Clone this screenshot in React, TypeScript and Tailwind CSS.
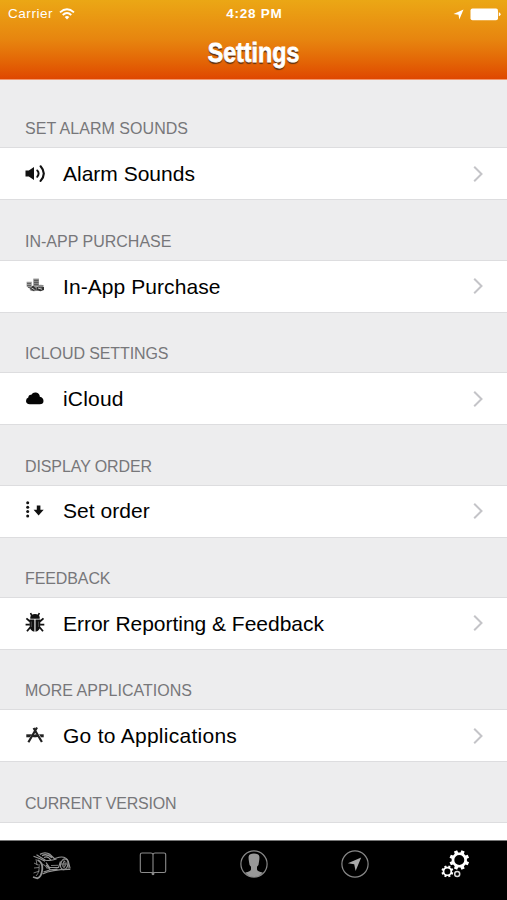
import type { ReactNode } from "react";

function gearPath(cx: number, cy: number, outer: number, root: number, hole: number, teeth: number): string {
  const step = (Math.PI * 2) / teeth;
  const at = (r: number, a: number) => `${(cx + r * Math.cos(a)).toFixed(2)} ${(cy + r * Math.sin(a)).toFixed(2)}`;
  const points: string[] = [];
  for (let i = 0; i < teeth; i++) {
    const a = i * step + step / 2;
    points.push(at(root, a - step * 0.31), at(outer, a - step * 0.22), at(outer, a + step * 0.22), at(root, a + step * 0.31));
  }
  return `M${points.join("L")}ZM${cx - hole} ${cy}a${hole} ${hole} 0 1 0 ${hole * 2} 0a${hole} ${hole} 0 1 0 ${-hole * 2} 0Z`;
}

function SpeakerIcon() {
  return (
    <svg width="22" height="22" viewBox="0 0 22 22" fill="none" stroke="#111" strokeLinecap="round">
      <path d="M.5 7.5h3.3L9 4v13l-5.2-3.6H.5z" fill="#111" stroke="none" />
      <path d="M12.2 7.4q2.8 3 0 6.4" strokeWidth="1.9" />
      <path d="M15.6 3.3q6.4 7.2 0 14.6" strokeWidth="2.1" />
    </svg>
  );
}

function CoinsIcon() {
  return (
    <svg width="22" height="22" viewBox="0 0 22 22" fill="none">
      <path d="M1.6 6.8h5.2v6.4H4l-2.4-1.6z" fill="#999" />
      <path d="M8.3 3.6h5.6v8H8.3z" fill="#888" />
      <path d="M2 8.5h4M2 10.5h4M3 12.5h4M9 5.5h4.5M9 7.5h4.5M9 9.5h4.5" stroke="#4a4a4a" strokeWidth=".7" />
      <ellipse cx="9" cy="13.7" rx="4.4" ry="2.5" fill="#8a8a8a" />
      <path d="M5 13.5l3-3 3.5 3.5-3 2zM12 12h7v3l-3.5 1.2-4-1z" fill="#333" />
      <path d="M6.5 13l3 1.6M13 13l4 1.2" stroke="#ddd" strokeWidth=".9" />
      <ellipse cx="15.7" cy="11.1" rx="3.1" ry="1.3" fill="#8a8a8a" />
    </svg>
  );
}

function CloudIcon() {
  return (
    <svg width="22" height="22" viewBox="0 0 22 22" fill="#050505">
      <path d="M4.8 16.2Q1 16.2 1 13.1 1 10.3 3.3 9.6 3.4 6.5 6.3 6.7 8 4 11 4.5q3.8.7 3.8 4.3 3.7.8 3.7 4.2 0 3.2-3.8 3.2z" />
    </svg>
  );
}

function OrderIcon() {
  return (
    <svg width="22" height="22" viewBox="0 0 22 22" fill="#111">
      <circle cx="2.7" cy="2.8" r="1.5" />
      <circle cx="2.7" cy="7.2" r="1.5" />
      <circle cx="2.7" cy="11.6" r="1.5" />
      <circle cx="2.7" cy="16" r="1.5" />
      <path d="M11.8 5.5h3.6v4.3h3.3L13.6 15.6 8.6 9.8h3.2z" />
    </svg>
  );
}

function BugIcon() {
  return (
    <svg width="22" height="22" viewBox="0 0 22 22" fill="none" stroke="#111">
      <path d="M5.3 5Q6 2 10 2t4.7 3v1.8H5.3z" fill="#111" stroke="none" />
      <path d="M6.7 3.8L5.6 1M13.2 3.8L14.3 1" strokeWidth="1.6" />
      <path d="M4.6 7.6h4.8v12.2Q4.5 18.8 4.6 13zM10.5 7.6h4.8v5.4q.1 5.8-4.8 6.8z" fill="#111" stroke="none" />
      <path d="M5 9.5L1.4 6.3M4.8 12.6H.6M5.3 15.2L2 19.3M14.9 9.5l3.6-3.2M15.1 12.6h4.2M14.6 15.2l3.4 4.1" strokeWidth="1.8" />
      <path d="M6.3 9.5v5.5M13.6 9.5v5.5" stroke="#666" strokeWidth=".7" />
    </svg>
  );
}

function AppsIcon() {
  return (
    <svg width="22" height="22" viewBox="0 0 22 22" fill="none" stroke="#222">
      <path d="M1.3 10.8h17.4" strokeWidth="3" />
      <path d="M7.8 9l5 4" stroke="#fff" strokeWidth="1" />
      <path d="M12.2 3L3.8 17.2" stroke="#fff" strokeWidth="3.2" />
      <path d="M8.6 3l8.3 14" stroke="#fff" strokeWidth="3.2" />
      <path d="M12 2.5L3.4 17.2M8.6 3l8.3 14" strokeWidth="2.2" />
      <path d="M6.5 10.8h6.5" strokeWidth="2.4" />
    </svg>
  );
}

function CarIcon() {
  return (
    <svg width="40" height="30" viewBox="0 0 40 30" fill="none" stroke="#959595" strokeWidth=".8">
      <path d="M8 3.4Q13 .4 18 3.4l4.5 4.4M10 4.6q5-2.4 10 2.2" strokeWidth="1.3" />
      <path d="M1.5 5.2l6 2.3 5.5 2.7M4.5 3.8l4.5 2.7 4.5 2.8q6 .8 11-1.2" strokeWidth="1.1" />
      <path d="M12 6.5q4-2 7 3M22 7.8l5-1.5q7-1.3 9.3 4l1.8 7.2" strokeWidth="1.1" />
      <path d="M5.5 9q5.2 2 4.8 9-.6 8-5 9.3L1 26" strokeWidth="1.8" />
      <path d="M4 8l1 6M7 13q1 8-3 12M2 12l4 2M2 17l5-.5M1.5 22l6-2M10 13l3 1.5 2.5 3.5" />
      <path d="M14 11.5l3.5 5h9l2-6M14 14l4.5 5M10.5 23Q20 18.2 38.3 18.4M11.5 21q7-3 14-3" strokeWidth="1.2" />
      <ellipse cx="32.3" cy="13.3" rx="3.6" ry="5.4" transform="rotate(14 32.3 13.3)" strokeWidth="1.3" />
      <ellipse cx="32.3" cy="13.3" rx="1.5" ry="3" transform="rotate(14 32.3 13.3)" />
      <path d="M29 13h6M32 8.5v9M36.3 10v7.5M19 14.5l7-.2" />
    </svg>
  );
}

function BookIcon() {
  return (
    <svg width="28" height="28" viewBox="0 0 28 28" fill="none" stroke="#8c8c8c" strokeWidth="1.1">
      <path d="M14 4.5Q13.5 3 12 3H3Q1.3 3 1.3 4.7v16.2q0 1.6 1.7 1.6h9.5q1.5 0 1.5 1.7 0-1.7 1.5-1.7H25q1.7 0 1.7-1.6V4.7Q26.7 3 25 3h-9q-1.5 0-2 1.5v19" />
      <circle cx="14" cy="23.8" r=".9" fill="#8c8c8c" />
    </svg>
  );
}

function ProfileIcon() {
  return (
    <svg width="28" height="28" viewBox="0 0 28 28" fill="none">
      <circle cx="14" cy="14" r="13.1" stroke="#888" strokeWidth="1.2" />
      <path d="M8.7 6.2Q9.3 3.5 14 3.5t5.3 2.7q.4 2-.3 5.5 0 3.5-2 5v2.8q.4 2 5.8 3Q19 27 14 27t-8.8-4.5q5.4-1 5.8-3v-2.8q-2-1.5-2-5-.7-3.5-.3-5.5z" fill="#999" />
    </svg>
  );
}

function CompassIcon() {
  return (
    <svg width="28" height="28" viewBox="0 0 28 28" fill="none">
      <circle cx="14" cy="14" r="13.1" stroke="#888" strokeWidth="1.2" />
      <path d="M20.2 7.6L14.6 21l-1.4-6.7-6.3-1.1z" fill="#aaa" />
    </svg>
  );
}

function GearsIcon() {
  return (
    <svg width="30" height="30" viewBox="0 0 30 30" fill="#fff" fillRule="evenodd">
      <path d={gearPath(18.3, 10, 10, 7.7, 5, 8)} />
      <path d={gearPath(6.4, 21.4, 6.1, 4.7, 3, 8)} />
      <circle cx="16.2" cy="24" r="2.5" fill="none" stroke="#ddd" strokeWidth="1.5" />
    </svg>
  );
}

interface Setting {
  heading: string;
  label: string;
  icon: ReactNode;
  headingSpacing: string;
  labelSpacing: string;
}

const settings: Setting[] = [
  { heading: "SET ALARM SOUNDS", label: "Alarm Sounds", icon: <SpeakerIcon />, headingSpacing: "tracking-[0.04px]", labelSpacing: "tracking-normal" },
  { heading: "IN-APP PURCHASE", label: "In-App Purchase", icon: <CoinsIcon />, headingSpacing: "tracking-normal", labelSpacing: "tracking-[0.07px]" },
  { heading: "ICLOUD SETTINGS", label: "iCloud", icon: <CloudIcon />, headingSpacing: "tracking-[-0.1px]", labelSpacing: "tracking-[0.2px]" },
  { heading: "DISPLAY ORDER", label: "Set order", icon: <OrderIcon />, headingSpacing: "tracking-[-0.1px]", labelSpacing: "tracking-[0.05px]" },
  { heading: "FEEDBACK", label: "Error Reporting & Feedback", icon: <BugIcon />, headingSpacing: "tracking-[-0.1px]", labelSpacing: "tracking-[-0.02px]" },
  { heading: "MORE APPLICATIONS", label: "Go to Applications", icon: <AppsIcon />, headingSpacing: "tracking-normal", labelSpacing: "tracking-[0.27px]" },
];

function SectionHeading({ text, spacing }: { text: string; spacing: string }) {
  return (
    <h2 className={`flex h-[59.4px] items-end pb-[8px] pl-[25px] text-[16px] leading-5 text-[#77777a] ${spacing}`}>{text}</h2>
  );
}

function SettingRow({ setting }: { setting: Setting }) {
  return (
    <button className="flex h-[53px] w-full items-center border-y border-[#dddddf] bg-white pr-[24px] pl-[25px] text-left">
      <span className="w-[38px] shrink-0">{setting.icon}</span>
      <span className={`flex-1 text-[21px] whitespace-nowrap text-black ${setting.labelSpacing}`}>{setting.label}</span>
      <svg width="10" height="18" viewBox="0 0 10 18" fill="none" stroke="#c4c4c8" strokeWidth="2">
        <path d="M1.2 1.7L8.5 9l-7.3 7.3" />
      </svg>
    </button>
  );
}

export default function App() {
  return (
    <div className="flex h-[900px] w-[507px] flex-col overflow-hidden bg-[#ededee] font-['Liberation_Sans',Arial,sans-serif]">
      <header className="h-[79.5px] shrink-0 border-b border-[#f09a70] bg-linear-to-b from-[#eba715] via-[#e7850f] via-50% to-[#df4700] text-white">
        <div className="grid h-[28px] grid-cols-3 items-center pr-[6px] pl-2 text-[13.5px]">
          <div className="flex items-center gap-[6px] tracking-[0.55px]">
            <span>Carrier</span>
            <svg width="16" height="12" viewBox="0 0 16 12" fill="none" stroke="#fff" strokeWidth="1.8">
              <path d="M1 4.4Q8-2 15 4.4M3.7 7Q8 3 12.3 7" />
              <path d="M5.7 9Q8 7 10.3 9L8 11.5z" fill="#fff" stroke="none" />
            </svg>
          </div>
          <span className="text-center font-bold tracking-[0.75px]">4:28 PM</span>
          <div className="flex items-center justify-end gap-[6px]">
            <svg width="11" height="11" viewBox="0 0 11 11" fill="#fff"><path d="M10.5.5L6.3 10.6 5.5 5.7.5 5z" /></svg>
            <svg width="31" height="13" viewBox="0 0 31 13" fill="#fff"><rect x=".5" y=".5" width="27.5" height="11.7" rx="2" /><path d="M28.8 4.3q1.8.3 1.8 2t-1.8 2z" /></svg>
          </div>
        </div>
        <h1 className="mt-[8px] origin-center scale-x-[0.845] text-center text-[27.5px] leading-[34px] font-bold [-webkit-text-stroke:0.8px_white] [text-shadow:0_1.5px_1px_#5f3212]">Settings</h1>
      </header>
      <main className="min-h-0 flex-1 overflow-hidden pt-[8.5px]">
        {settings.map((s) => (
          <section key={s.heading}>
            <SectionHeading text={s.heading} spacing={s.headingSpacing} />
            <SettingRow setting={s} />
          </section>
        ))}
        <SectionHeading text="CURRENT VERSION" spacing="tracking-[-0.2px]" />
        <div className="h-[53px] border-y border-[#dddddf] bg-white" />
      </main>
      <nav className="grid h-[60.5px] shrink-0 grid-cols-5 border-t border-[#777] bg-black pl-px">
        <div className="flex justify-center pt-[10px]"><CarIcon /></div>
        <div className="flex justify-center pt-[9px]"><BookIcon /></div>
        <div className="flex justify-center pt-[9px]"><ProfileIcon /></div>
        <div className="flex justify-center pt-[9px]"><CompassIcon /></div>
        <div className="flex justify-center pt-[9px]"><GearsIcon /></div>
      </nav>
    </div>
  );
}
